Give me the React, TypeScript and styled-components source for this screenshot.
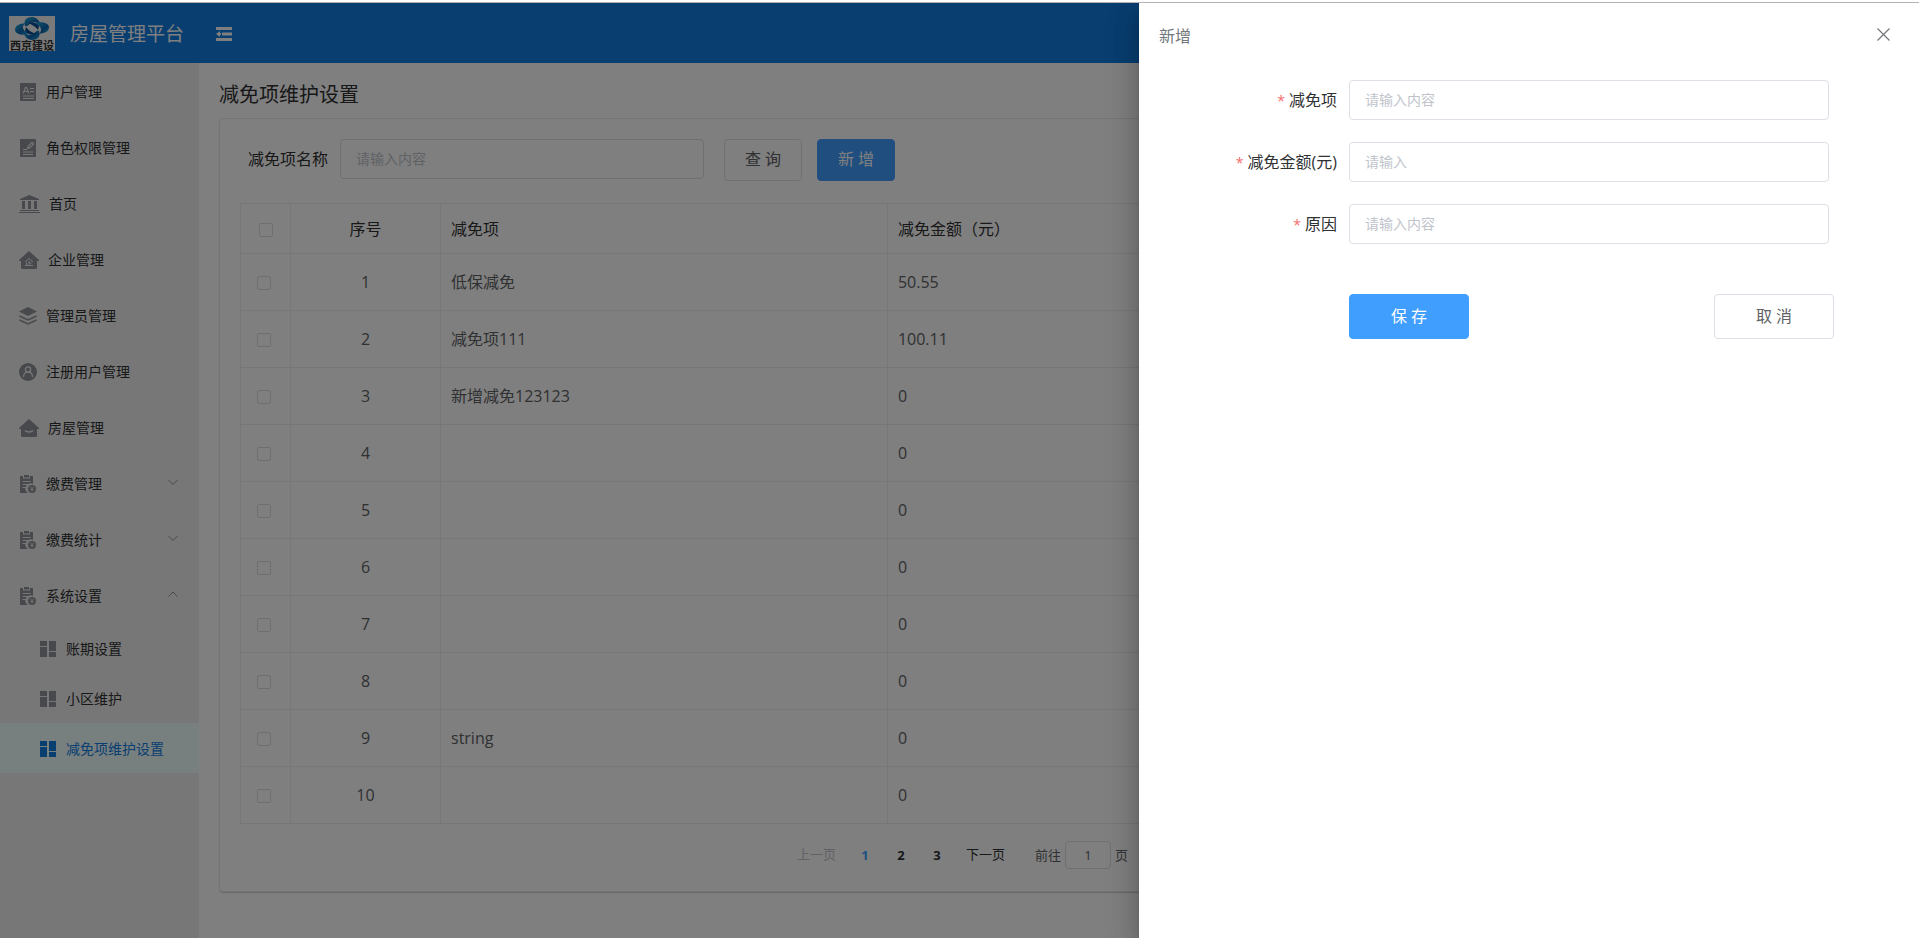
import React from "react";
import styled, { createGlobalStyle, css } from "styled-components";

const GlobalStyle = createGlobalStyle`
  * { box-sizing: border-box; }
  body {
    margin: 0;
    background: #fff;
    color: #303133;
    font-family: "Open Sans", "Noto Sans CJK SC", sans-serif;
    font-size: 16px;
    line-height: 20px;
  }
  button, input { font: inherit; color: inherit; }
`;

const Page = styled.div`
  display: flex;
  flex-direction: column;
  min-height: 100vh;
  border-top: 2px solid #fff;
`;

const Shell = styled.div`
  position: relative;
  flex: 1;
  display: flex;
  flex-direction: column;
  border-top: 1px solid #b5b1b4;
`;

const Header = styled.header`
  display: flex;
  align-items: center;
  height: 60px;
  padding-left: 9px;
  background: #107ce0;
  color: #fff;
`;

const Logo = styled.div`
  display: flex;
  flex-direction: column;
  align-items: center;
  width: 46px;
  height: 35px;
  margin: 1px 15px 0 0;
  background: #f4f4f4;
  color: #333;
  font-size: 11px;
  font-weight: 700;
  line-height: 9px;
  white-space: nowrap;
`;

const Brand = styled.span`
  margin-top: 2px;
  font-size: 19px;
  line-height: 28px;
`;

const IconButton = styled.button`
  display: flex;
  padding: 0;
  border: 0;
  background: none;
  cursor: pointer;
`;

const FoldButton = styled(IconButton)`
  margin: 2px 0 0 32px;
`;

const Body = styled.div`
  flex: 1;
  display: flex;
`;

const Sidebar = styled.nav`
  width: 199px;
  flex-shrink: 0;
  background: #eee;
`;

const MenuItem = styled.a<{ $sub?: boolean; $active?: boolean }>`
  display: flex;
  align-items: center;
  gap: 9px;
  height: ${(p) => (p.$sub ? 50 : 56)}px;
  padding: 2px 20px 0 ${(p) => (p.$sub ? 39 : 19)}px;
  color: #303133;
  font-size: 14px;
  text-decoration: none;
  ${(p) =>
    p.$active &&
    css`
      background: #f0ffff;
      color: #107ce0;
    `}
`;

const MenuIcon = styled.span<{ $active?: boolean }>`
  display: flex;
  color: ${(p) => (p.$active ? "#107ce0" : "#909399")};
`;

const Arrow = styled.svg`
  margin-left: auto;
`;

const Main = styled.main`
  flex: 1;
  min-width: 0;
  padding: 17px 20px 20px;
`;

const PageTitle = styled.h1`
  margin: 0 0 8px;
  font-size: 20px;
  font-weight: 400;
  line-height: 30px;
`;

const Card = styled.section`
  padding: 20px;
  border: 1px solid #ebebeb;
  border-radius: 4px;
  box-shadow: 0 1px 1px rgba(0, 0, 0, 0.2);
`;

const Toolbar = styled.form`
  display: flex;
  align-items: flex-start;
  margin-bottom: 22px;
  padding-left: 8px;
`;

const SearchLabel = styled.label`
  margin-right: 12px;
  line-height: 40px;
`;

const TextInput = styled.input`
  width: 100%;
  height: 40px;
  padding: 0 15px 2px;
  border: 1px solid #dcdfe6;
  border-radius: 4px;
  background: #fff;
  font-size: 14px;
  outline: 0;
  &::placeholder { color: #c0c4cc; }
`;

const SearchInput = styled(TextInput)`
  width: 364px;
  margin-right: 20px;
`;

const Button = styled.button<{ $primary?: boolean; $large?: boolean }>`
  width: ${(p) => (p.$large ? 120 : 78)}px;
  height: ${(p) => (p.$large ? 45 : 42)}px;
  padding: 0 0 2px;
  border: 1px solid ${(p) => (p.$primary ? "#409eff" : "#dcdfe6")};
  border-radius: 4px;
  background: ${(p) => (p.$primary ? "#409eff" : "#fff")};
  color: ${(p) => (p.$primary ? "#fff" : "#606266")};
  cursor: pointer;
  & + & { margin-left: 15px; }
`;

const Table = styled.table`
  width: 100%;
  table-layout: fixed;
  border-spacing: 0;
  border-top: 1px solid #ebeef5;
  border-left: 1px solid #ebeef5;
`;

const Cell = styled.td<{ $center?: boolean }>`
  height: 57px;
  padding: 0 10px;
  border-right: 1px solid #ebeef5;
  border-bottom: 1px solid #ebeef5;
  color: #606266;
  text-align: ${(p) => (p.$center ? "center" : "left")};
`;

const HeadCell = styled(Cell)`
  height: 50px;
  color: #303133;
  font-weight: 400;
`;

const CheckCell = styled(Cell)`
  padding: 2px 19px 0 16px;
`;

const CheckHeadCell = styled(HeadCell)`
  padding: 2px 17px 0 18px;
`;

const Check = styled.input`
  appearance: none;
  display: block;
  width: 14px;
  height: 14px;
  margin: 0;
  border: 1px solid #dcdfe6;
  border-radius: 2px;
  background: #fff;
`;

const CheckCol = styled.col`
  width: 50px;
`;
const IndexCol = styled.col`
  width: 150px;
`;
const NameCol = styled.col`
  width: 27.3%;
`;

const Pagination = styled.div`
  display: flex;
  align-items: center;
  height: 28px;
  margin: 17px 0 2px 34%;
  color: #606266;
  font-size: 13px;
`;

const PageButton = styled.button<{ $pager?: boolean; $current?: boolean }>`
  width: ${(p) => (p.$pager ? "36px" : "auto")};
  padding: ${(p) => (p.$pager ? 0 : "0 0 2px")};
  border: 0;
  background: none;
  color: ${(p) => (p.$current ? "#409eff" : "#303133")};
  font-weight: ${(p) => (p.$pager ? 700 : 400)};
  &:disabled { color: #c0c4cc; }
`;

const Pager = styled.div`
  display: flex;
  margin: 0 11px;
`;

const Jump = styled.label`
  display: flex;
  align-items: center;
  gap: 4px;
  margin-left: 30px;
`;

const JumpInput = styled(TextInput)`
  width: 46px;
  height: 28px;
  padding: 0 3px;
  font-size: 13px;
  text-align: center;
`;

const Overlay = styled.div`
  position: absolute;
  inset: 0;
  display: flex;
  justify-content: flex-end;
  overflow: hidden;
  background: rgba(0, 0, 0, 0.5);
`;

const Drawer = styled.aside`
  width: 780px;
  background: #fff;
  box-shadow: 0 8px 10px -5px rgba(0, 0, 0, 0.2),
    0 16px 24px 2px rgba(0, 0, 0, 0.14), 0 6px 30px 5px rgba(0, 0, 0, 0.12);
`;

const DrawerHeader = styled.div`
  display: flex;
  align-items: flex-start;
  justify-content: space-between;
  height: 77px;
  padding: 25px 29px 0 20px;
  color: #72767b;
  line-height: 16px;
`;

const DrawerForm = styled.form`
  display: flex;
  flex-direction: column;
  gap: 22px;
`;

const Field = styled.div`
  display: flex;
  height: 40px;
  padding-right: 90px;
`;

const FieldLabel = styled.label`
  width: 210px;
  flex-shrink: 0;
  padding-right: 12px;
  line-height: 40px;
  text-align: right;
  &::before {
    content: "*";
    margin-right: 4px;
    color: #f56c6c;
    font-size: 14px;
    line-height: 20px;
  }
`;

const DrawerActions = styled.div`
  display: flex;
  justify-content: space-between;
  margin-top: 28px;
  padding: 0 85px 0 210px;
`;

const Badge = () => (
  <svg width="18" height="18" viewBox="0 0 18 18" fill="currentColor">
    <rect x="1" width="16" height="18" rx="1" />
    <g fill="none" stroke="#eee">
      <path d="M4 10.5 6.500 4.500h1L10 10.500M5 8.500h4M11 5.500h4M11 8.500h4" strokeWidth="1.100" />
      <path d="M4 13h11M4 15.500h11" strokeWidth="1.100" />
    </g>
  </svg>
);

const Permission = () => (
  <svg width="18" height="18" viewBox="0 0 18 18" fill="currentColor">
    <rect x="1" width="16" height="18" rx="1" />
    <g fill="none" stroke="#eee" strokeWidth="1.100">
      <path d="m8.500 9.500.6-2.200 4-4 1.600 1.600-4 4zM4 10.500h4M4 13h10M4 15.500h10" />
    </g>
  </svg>
);

const Bank = () => (
  <svg width="21" height="18" viewBox="0 0 21 18" fill="currentColor">
    <path d="M10.500 0 20 4v1H1V4zM3 6h3v8H3zM9 6h3v8H9zM15 6h3v8h-3zM1 15h19v1H1zM0 17h21v1H0z" />
  </svg>
);

const Company = () => (
  <svg width="20" height="18" viewBox="0 0 20 18" fill="currentColor">
    <path d="M10 0 20 9v1h-2v7a1 1 0 0 1-1 1H3a1 1 0 0 1-1-1v-7H0V9z" />
    <path
      d="M6 11l4-3.500L14 11M10 10v4.500M10 12h2.500M7.500 11.500v3M6 14.500h8"
      fill="none"
      stroke="#eee"
    />
  </svg>
);

const Layers = () => (
  <svg width="18" height="18" viewBox="0 0 18 18" fill="none" stroke="currentColor">
    <path d="m9 0 9 4.500L9 9 0 4.500z" fill="currentColor" stroke="none" />
    <path d="m.5 9 8.500 4 8.500-4M.5 13 9 17l8.500-4" strokeWidth="1.400" />
  </svg>
);

const Person = () => (
  <svg width="18" height="18" viewBox="0 0 18 18" fill="currentColor">
    <circle cx="9" cy="9" r="9" />
    <g fill="none" stroke="#eee" strokeWidth="1.300">
      <circle cx="9" cy="6.500" r="2.600" />
      <path d="M4.500 14c0-3 2-4.800 4.500-4.800s4.500 1.800 4.500 4.800" />
    </g>
  </svg>
);

const House = () => (
  <svg width="20" height="18" viewBox="0 0 20 18" fill="currentColor">
    <path d="M10 0 20 9v1h-2v7a1 1 0 0 1-1 1H3a1 1 0 0 1-1-1v-7H0V9z" />
    <path d="M6 11.500c2 2 6 2 8 0" fill="none" stroke="#eee" strokeWidth="1.500" />
  </svg>
);

const Bill = () => (
  <svg width="18" height="18" viewBox="0 0 18 18" fill="currentColor">
    <path d="M1 1h3v2.500h7V1h3v8a4.700 4.700 0 0 0-5 9H1z" />
    <path d="M5 0h5v2.500H5z" />
    <path d="M3.500 6.500h8M3.500 9.500h5.500M3.500 12.500h4" stroke="#eee" strokeWidth="1.200" />
    <circle cx="13" cy="14" r="4" />
    <path d="m11.500 12 1.500 1.800 1.500-1.800M13 13.800v2.700M11.500 14.500h3" fill="none" stroke="#eee" strokeWidth=".9" />
  </svg>
);

const Blocks = () => (
  <svg width="18" height="16" viewBox="0 0 18 16" fill="currentColor">
    <path d="M1 0h7v5H1zM1 6h7v10H1zM10 0h7v10h-7zM10 11h7v5h-7z" />
  </svg>
);

const Chevron = ({ up }: { up?: boolean }) => (
  <Arrow width="12" height="12" viewBox="0 0 12 12" fill="none" stroke="#909399">
    <path d={up ? "M1.500 6.500 6 2l4.500 4.500" : "M1.500 2 6 6.500 10.500 2"} />
  </Arrow>
);

const LogoMark = () => (
  <svg width="36" height="25" viewBox="0 0 36 25">
    <defs>
      <linearGradient id="mark" x1="0" y1="0" x2="1" y2="1">
        <stop offset="0" stopColor="#22a8dc" />
        <stop offset="0.6" stopColor="#0f66b0" />
        <stop offset="1" stopColor="#22a8dc" />
      </linearGradient>
    </defs>
    <g fill="url(#mark)">
      <path d="M11 10C9 4 13 1 18 1c5 0 7 4 9 7-3-1-7-3-10-1-2 1-3 4-6 3z" />
      <path d="M22 7c5-2 13 0 13 4 0 5-5 6-10 7 2-3 3-4 1-7-1-2-4-2-4-4z" />
      <path d="M25 15c2 6-2 9-7 9-5 0-7-4-9-7 3 1 7 3 10 1 2-1 3-4 6-3z" />
      <path d="M14 18C9 20 1 18 1 14c0-5 5-6 10-7-2 3-3 4-1 7 1 2 4 2 4 4z" />
      <path d="M14 7c4-2 8 0 11 3l-1 4c-2-3-5-5-10-7z" fill="#0a4a94" />
      <path d="M22 18c-4 2-8 0-11-3l1-4c2 3 5 5 10 7z" fill="#0a4a94" />
    </g>
  </svg>
);

const menu: { label: string; icon: React.ReactNode; open?: boolean }[] = [
  { label: "用户管理", icon: <Badge /> },
  { label: "角色权限管理", icon: <Permission /> },
  { label: "首页", icon: <Bank /> },
  { label: "企业管理", icon: <Company /> },
  { label: "管理员管理", icon: <Layers /> },
  { label: "注册用户管理", icon: <Person /> },
  { label: "房屋管理", icon: <House /> },
  { label: "缴费管理", icon: <Bill />, open: false },
  { label: "缴费统计", icon: <Bill />, open: false },
  { label: "系统设置", icon: <Bill />, open: true },
];

const subMenu = ["账期设置", "小区维护", "减免项维护设置"];

const rows = [
  ["低保减免", "50.55"],
  ["减免项111", "100.11"],
  ["新增减免123123", "0"],
  ["", "0"],
  ["", "0"],
  ["", "0"],
  ["", "0"],
  ["", "0"],
  ["string", "0"],
  ["", "0"],
];

const fields = [
  { id: "item", label: "减免项", hint: "请输入内容" },
  { id: "amount", label: "减免金额(元)", hint: "请输入" },
  { id: "reason", label: "原因", hint: "请输入内容" },
];

export default function App() {
  return (
    <Page>
      <GlobalStyle />
      <Shell>
        <Header>
          <Logo>
            <LogoMark />
            西京建设
          </Logo>
          <Brand>房屋管理平台</Brand>
          <FoldButton type="button" aria-label="折叠菜单">
            <svg width="16" height="14" viewBox="0 0 16 14" fill="currentColor">
              <path d="M0 0h16v3H0zM6 5.500h10v3H6zM0 11h16v3H0zM0 7l4-3v2h1v2H4v2z" />
            </svg>
          </FoldButton>
        </Header>
        <Body>
          <Sidebar>
            {menu.map((m) => (
              <MenuItem key={m.label} href="#">
                <MenuIcon>{m.icon}</MenuIcon>
                {m.label}
                {m.open !== undefined && <Chevron up={m.open} />}
              </MenuItem>
            ))}
            {subMenu.map((label, i) => (
              <MenuItem key={label} href="#" $sub $active={i === 2}>
                <MenuIcon $active={i === 2}>
                  <Blocks />
                </MenuIcon>
                {label}
              </MenuItem>
            ))}
          </Sidebar>
          <Main>
            <PageTitle>减免项维护设置</PageTitle>
            <Card>
              <Toolbar>
                <SearchLabel htmlFor="search">减免项名称</SearchLabel>
                <SearchInput id="search" placeholder="请输入内容" />
                <Button type="button">查 询</Button>
                <Button type="button" $primary>新 增</Button>
              </Toolbar>
              <Table>
                <colgroup>
                  <CheckCol />
                  <IndexCol />
                  <NameCol />
                  <col />
                </colgroup>
                <thead>
                  <tr>
                    <CheckHeadCell as="th">
                      <Check type="checkbox" aria-label="全选" />
                    </CheckHeadCell>
                    <HeadCell as="th" $center>序号</HeadCell>
                    <HeadCell as="th">减免项</HeadCell>
                    <HeadCell as="th">减免金额（元）</HeadCell>
                  </tr>
                </thead>
                <tbody>
                  {rows.map(([name, amount], i) => (
                    <tr key={i}>
                      <CheckCell>
                        <Check type="checkbox" aria-label={`选择 ${i + 1}`} />
                      </CheckCell>
                      <Cell $center>{i + 1}</Cell>
                      <Cell>{name}</Cell>
                      <Cell>{amount}</Cell>
                    </tr>
                  ))}
                </tbody>
              </Table>
              <Pagination>
                <PageButton type="button" disabled>上一页</PageButton>
                <Pager>
                  {[1, 2, 3].map((n) => (
                    <PageButton key={n} type="button" $pager $current={n === 1}>
                      {n}
                    </PageButton>
                  ))}
                </Pager>
                <PageButton type="button">下一页</PageButton>
                <Jump>
                  前往
                  <JumpInput defaultValue="1" />
                  页
                </Jump>
              </Pagination>
            </Card>
          </Main>
        </Body>
        <Overlay>
          <Drawer role="dialog" aria-label="新增">
            <DrawerHeader>
              <span>新增</span>
              <IconButton type="button" aria-label="关闭">
                <svg width="13" height="13" viewBox="0 0 13 13" stroke="currentColor" strokeWidth="1.200">
                  <path d="m.5.5 12 12M12.500.5l-12 12" />
                </svg>
              </IconButton>
            </DrawerHeader>
            <DrawerForm>
              {fields.map((f) => (
                <Field key={f.id}>
                  <FieldLabel htmlFor={f.id}>{f.label}</FieldLabel>
                  <TextInput id={f.id} placeholder={f.hint} />
                </Field>
              ))}
              <DrawerActions>
                <Button type="button" $primary $large>保 存</Button>
                <Button type="button" $large>取 消</Button>
              </DrawerActions>
            </DrawerForm>
          </Drawer>
        </Overlay>
      </Shell>
    </Page>
  );
}
